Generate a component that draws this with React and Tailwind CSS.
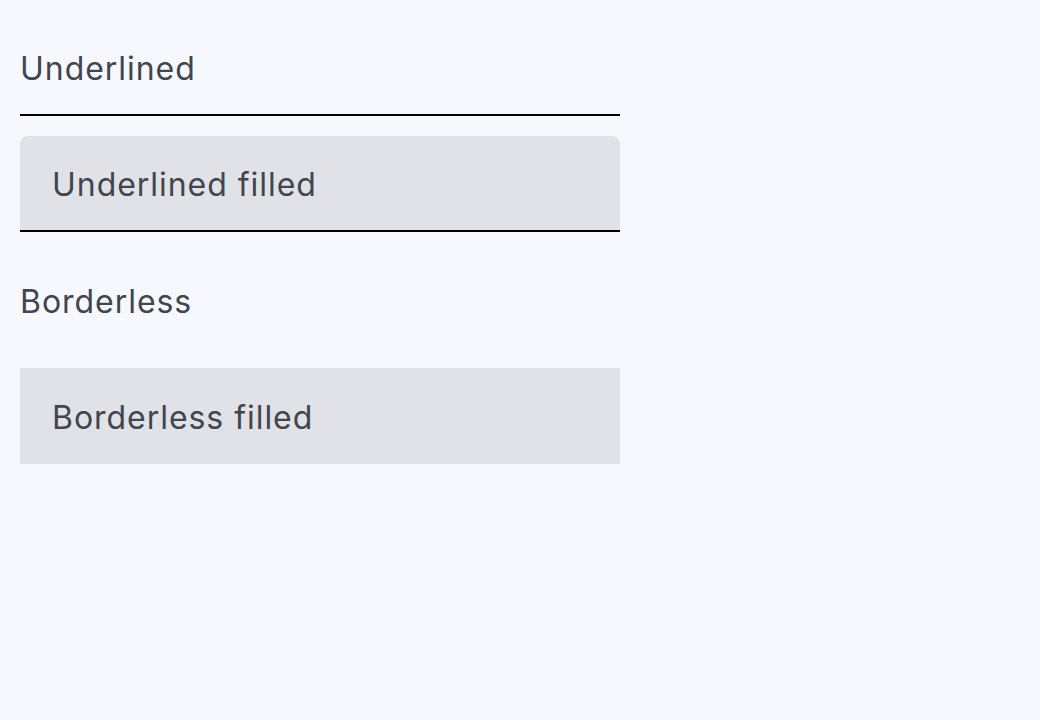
export default function App() {
  const base =
    "w-full h-full bg-transparent outline-none pt-[3px] text-[32px] tracking-[0.03em] text-[#41464e] placeholder:text-[#41464e] placeholder:opacity-100";
  return (
    <div
      className="min-h-[720px] w-[1040px] bg-[#f7f8fe] pt-5 pl-5"
      style={{ fontFamily: "Inter, 'Noto Sans', sans-serif" }}
    >
      <div className="flex w-[600px] flex-col gap-5">
        <div className="h-[96px] border-b-2 border-black">
          <input className={base} placeholder="Underlined" readOnly />
        </div>
        <div className="h-[96px] rounded-t-[8px] border-b-2 border-black bg-[#e1e2e7] px-8">
          <input className={base} placeholder="Underlined filled" readOnly />
        </div>
        <div className="h-[96px]">
          <input className={base} placeholder="Borderless" readOnly />
        </div>
        <div className="h-[96px] bg-[#e1e2e7] px-8">
          <input className={base} placeholder="Borderless filled" readOnly />
        </div>
      </div>
    </div>
  );
}
